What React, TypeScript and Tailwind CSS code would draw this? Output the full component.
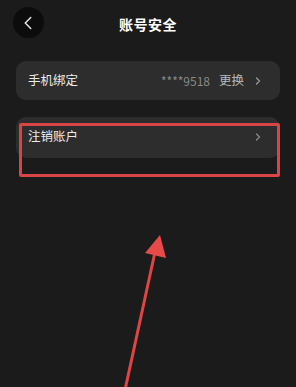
import { ChevronLeft, ChevronRight } from "lucide-react";

const font = "font-['Noto_Sans_CJK_SC','Noto_Sans',sans-serif]";

export default function App() {
    return (
        <div className={`relative w-[296px] h-[387px] overflow-hidden bg-[#1b1b1b] text-white ${font}`}>
            {/* Header */}
            <div className="relative flex items-center justify-center h-[44px]">
                <div className="absolute left-[13px] top-[7px] w-[31px] h-[31px] rounded-full bg-[#0c0c0c] flex items-center justify-center">
                    <ChevronLeft className="w-[22px] h-[22px] text-[#e6e6e6] -ml-[2px]" strokeWidth={1.6} />
                </div>
                <h1 className="text-[14px] font-bold mt-[5px] tracking-[0.5px]">账号安全</h1>
            </div>

            {/* Rows */}
            <div className="flex flex-col gap-[17px] px-[16px] mt-[17px]">
                <div className="flex items-center h-[39px] rounded-[10px] bg-[#2d2d2d] pl-[12px] pr-[16px]">
                    <span className="text-[12.5px] text-[#ececec] flex-1">手机绑定</span>
                    <span className="text-[12px] text-[#8a8a8a] mr-[9px]">****9518</span>
                    <span className="text-[12.5px] text-[#b8b8b8] mr-[8px]">更换</span>
                    <ChevronRight className="w-[12px] h-[12px] text-[#9a9a9a]" strokeWidth={2.5} />
                </div>
                <div className="flex items-center h-[41px] rounded-[10px] bg-[#2d2d2d] pl-[12px] pr-[16px]">
                    <span className="text-[12.5px] text-[#ececec] flex-1 -mt-[2px]">注销账户</span>
                    <ChevronRight className="w-[12px] h-[12px] text-[#8a8a8a] -mt-[2px]" strokeWidth={2.5} />
                </div>
            </div>

            {/* Annotation box */}
            <div className="absolute left-[19px] top-[123px] w-[261px] h-[54px] border-[3px] border-[#d94545] rounded-[2px]" />

            {/* Annotation arrow */}
            <svg className="absolute left-0 top-0" width="296" height="387" viewBox="0 0 296 387">
                <line x1="125" y1="390" x2="155" y2="252" stroke="#e04444" strokeWidth="3" />
                <polygon points="160,235 145,253 166,258" fill="#e84a4a" />
            </svg>
        </div>
    );
}
